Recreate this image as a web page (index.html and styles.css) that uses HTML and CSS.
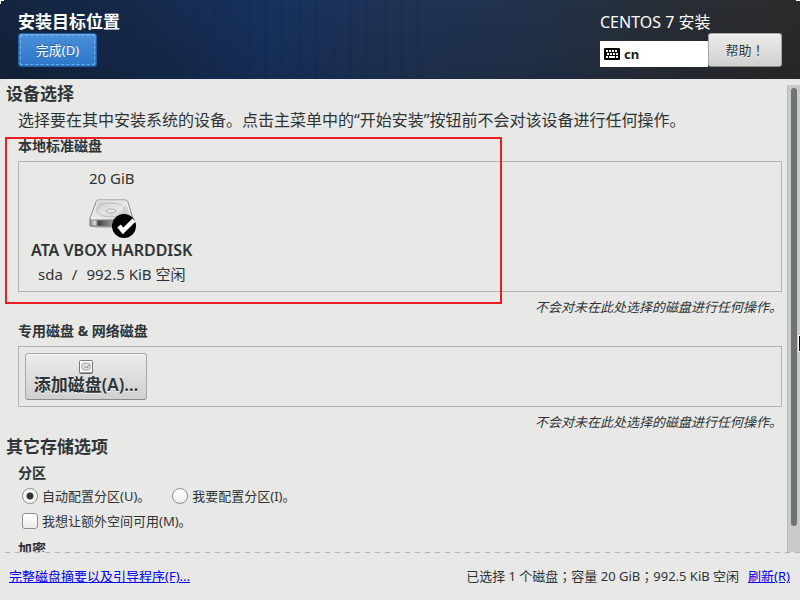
FILE: index.html
```html
<!DOCTYPE html>
<html lang="zh-CN">
<head>
  <meta charset="utf-8">
  <title>安装目标位置</title>
  <link rel="stylesheet" href="styles.css">
</head>
<body>
  <header class="topbar">
    <div class="topbar-left">
      <h1>安装目标位置</h1>
      <button class="btn btn-done" type="button">完成(D)</button>
    </div>
    <div class="topbar-right">
      <div class="product">CENTOS 7 安装</div>
      <div class="topbar-row">
        <div class="keyboard">
          <svg width="16" height="12" viewBox="0 0 16 12">
            <rect width="16" height="12" rx="1" fill="#000"/>
            <path d="M2 3h2M5 3h2M8 3h2M11 3h2M3 6h2M6 6h2M9 6h2M12 6h2M2 9h2M5 9h6M12 9h2" stroke="#fff" stroke-width="2"/>
          </svg>
          <span>cn</span>
        </div>
        <button class="btn btn-help" type="button">帮助<span class="punct" lang="ja">！</span></button>
      </div>
    </div>
  </header>

  <div class="middle">
    <main class="content">
      <h2>设备选择</h2>
      <p class="intro">选择要在其中安装系统的设备。点击主菜单中的“开始安装”按钮前不会对该设备进行任何操作。</p>

      <section class="group local">
        <h3>本地标准磁盘</h3>
        <div class="box box-local">
          <button class="disk" type="button">
            <span>20 GiB</span>
            <svg class="disk-icon" width="48" height="48" viewBox="0 0 48 48">
              <defs>
                <linearGradient id="top" x1="0" y1="0" x2="1" y2="1">
                  <stop offset="0" stop-color="#c4c4c4"/>
                  <stop offset=".5" stop-color="#e6e6e6"/>
                  <stop offset="1" stop-color="#b5b5b5"/>
                </linearGradient>
                <linearGradient id="front" x1="0" y1="0" x2="1" y2="0">
                  <stop offset="0" stop-color="#888"/>
                  <stop offset=".12" stop-color="#ddd"/>
                  <stop offset=".2" stop-color="#444"/>
                  <stop offset=".55" stop-color="#999"/>
                  <stop offset="1" stop-color="#777"/>
                </linearGradient>
              </defs>
              <ellipse cx="23" cy="36" rx="22" ry="2" fill="#bbb"/>
              <path d="M2 29h42v6q0 1-1 1H3q-1 0-1-1z" fill="url(#front)" stroke="#777"/>
              <path d="M10 10h27q2 0 3 2l5 17q0 1-1 1H3q-2 0-1-2L8 12q1-2 2-2z" fill="url(#top)" stroke="#8c8c8c"/>
              <path d="M10 11h27q1 0 2 2l4 15H4L9 13q0-2 1-2z" fill="none" stroke="#f6f6f6"/>
              <ellipse cx="23" cy="20" rx="14" ry="7" fill="none" stroke="#c0c0c0"/>
              <ellipse cx="23" cy="21" rx="5" ry="2" fill="#e8e8e8" stroke="#b0b0b0"/>
              <path d="M36 13l-3 6-8 7" fill="none" stroke="#f4f4f4"/>
              <circle cx="36" cy="36" r="12" fill="#000"/>
              <path d="M31 36l4 5 11-11" fill="none" stroke="#fff" stroke-width="4.5"/>
            </svg>
            <strong>ATA VBOX HARDDISK</strong>
            <span class="disk-info"><span>sda</span><span>/</span><span>992.5 KiB 空闲</span></span>
          </button>
        </div>
        <div class="highlight"></div>
        <p class="note">不会对未在此处选择的磁盘进行任何操作。</p>
      </section>

      <section class="group">
        <h3>专用磁盘 &amp; 网络磁盘</h3>
        <div class="box box-network">
          <button class="btn btn-add" type="button">
            <svg width="14" height="14" viewBox="0 0 14 14">
              <rect x=".5" y=".5" width="13" height="13" rx="1" fill="#eee" stroke="#777"/>
              <path d="M1 13h12" stroke="#555"/>
              <rect x="1.5" y="1.5" width="11" height="10" fill="none" stroke="#fff"/>
              <ellipse cx="7" cy="6.5" rx="4.5" ry="3.5" fill="#ddd" stroke="#aaa"/>
              <path d="M5 7h4M8 8l3-4" stroke="#999"/>
            </svg>
            <span>添加磁盘(A)…</span>
          </button>
        </div>
        <p class="note">不会对未在此处选择的磁盘进行任何操作。</p>
      </section>

      <h2>其它存储选项</h2>
      <section class="group options">
        <h3>分区</h3>
        <div class="option-row">
          <label><input type="radio" name="partition" checked>自动配置分区(U)。</label>
          <label><input type="radio" name="partition">我要配置分区(I)。</label>
        </div>
        <div class="option-row">
          <label><input type="checkbox">我想让额外空间可用(M)。</label>
        </div>
        <h3>加密</h3>
      </section>
    </main>
    <div class="scrollbar"><div class="thumb"></div></div>
  </div>

  <footer class="bottombar">
    <a href="#">完整磁盘摘要以及引导程序(F)...</a>
    <div class="summary">
      <span>已选择 1 个磁盘<span class="punct" lang="ja">；</span>容量 20 GiB<span class="punct" lang="ja">；</span>992.5 KiB 空闲</span>
      <a href="#">刷新(R)</a>
    </div>
  </footer>
  <div class="cursor"></div>
</body>
</html>
```
FILE: styles.css
```css
* {
  box-sizing: border-box;
}
body {
  margin: 0;
  height: 100vh;
  display: flex;
  flex-direction: column;
  position: relative;
  overflow: hidden;
  background: #e8e8e6;
  color: #2e3436;
  font-family: "Noto Sans", "Noto Sans CJK SC", sans-serif;
  font-size: 13px;
}
h1, h2, h3, p {
  margin: 0;
}
a {
  color: #0000ee;
}
button, input {
  font-family: inherit;
  color: #2e3436;
  margin: 0;
}
/* centred full-width punctuation */
.punct {
  font-family: "Noto Sans CJK JP", sans-serif;
  line-height: 1;
}

/* top bar */
.topbar {
  height: 79px;
  flex: none;
  display: flex;
  justify-content: space-between;
  padding: 11px 18px 0;
  color: #fff;
  background:
    linear-gradient(#fff, #fff) 0 0 / 4px 1px no-repeat,
    linear-gradient(#fff, #fff) 0 0 / 1px 4px no-repeat,
    linear-gradient(#fff, #fff) 100% 0 / 4px 1px no-repeat,
    repeating-linear-gradient(90deg, rgba(0,0,0,0) 0 5px, rgba(0,0,0,.07) 7px, rgba(0,0,0,0) 10px 17px) 190px 0 / 230px 100% no-repeat,
    linear-gradient(180deg, rgba(0,0,0,0), rgba(0,0,0,.12)),
    linear-gradient(90deg, #14243f 0%, #152a4c 18%, #17325f 34%, #1f3355 50%, #22324b 68%, #282e37 82%, #2b2b2b 100%);
}
.topbar h1 {
  font-size: 17px;
  line-height: 22px;
}
.product {
  font-size: 16px;
  line-height: 22px;
}
.topbar-row {
  display: flex;
  align-items: flex-end;
}
.keyboard {
  width: 108px;
  height: 26px;
  display: flex;
  align-items: center;
  gap: 4px;
  padding-left: 4px;
  background: #fff;
  color: #1a1a1a;
  font-weight: bold;
}
.btn {
  border: 1px solid #a6a6a4;
  border-bottom-color: #8a8a88;
  border-radius: 3px;
  background: linear-gradient(#ececeb, #d0d0ce);
  box-shadow: inset 0 1px #f5f5f4;
  text-shadow: 0 1px #f4f4f4;
  font-size: 13px;
}
.btn-help {
  width: 74px;
  height: 34px;
  padding: 0 0 2px;
}
.btn-done {
  display: block;
  width: 79px;
  height: 34px;
  padding: 0 0 2px;
  color: #fff;
  border-color: #1c5fab;
  background: linear-gradient(#4a90d9, #2d76c8);
  box-shadow: inset 0 1px #6ba5e2;
  text-shadow: 0 -1px #2864a5;
  outline: 1px dashed #78abe2;
  outline-offset: -3px;
}

/* scrolled area */
.middle {
  flex: 1;
  min-height: 0;
  display: flex;
}
.content {
  flex: 1;
  overflow: hidden;
  padding: 2px 5px 0 6px;
}
h2 {
  font-size: 17px;
  line-height: 26px;
}
h3 {
  font-size: 14px;
  line-height: 24px;
}
.intro {
  padding-left: 12px;
  font-size: 16px;
  line-height: 26px;
}
.group {
  position: relative;
  margin: 1px 0 2px 12px;
}
.box {
  margin-top: 3px;
  border: 1px solid #b3b3b1;
}
.box-local {
  height: 131px;
}
.disk {
  display: flex;
  flex-direction: column;
  align-items: center;
  padding: 4px 12px;
  border: 0;
  background: none;
  font-size: 15px;
  line-height: 24px;
}
.disk strong {
  font-size: 16px;
  font-weight: 600;
}
.disk-info {
  display: flex;
  gap: 9px;
}
.note {
  margin-top: 5px;
  line-height: 20px;
  text-align: right;
  font-style: italic;
}
/* red frame round the local disk */
.highlight {
  position: absolute;
  top: 3px;
  left: -13px;
  width: 497px;
  height: 167px;
  border: 2px solid #ed1c24;
}
.box-network {
  padding: 6px;
}
.btn-add {
  width: 122px;
  height: 47px;
  display: flex;
  flex-direction: column;
  align-items: center;
  justify-content: center;
  padding: 2px 0 0;
  font-size: 17px;
  font-weight: 600;
  line-height: 22px;
}
.btn-add span {
  white-space: nowrap;
}
.option-row {
  display: flex;
  gap: 22px;
  height: 22px;
  margin-bottom: 3px;
  padding-left: 4px;
}
.option-row label {
  display: flex;
  align-items: center;
  gap: 4px;
  line-height: 20px;
}
.option-row + h3 {
  margin-top: 5px;
}
.option-row input {
  appearance: none;
  width: 16px;
  height: 16px;
  border: 1px solid #8f8f8d;
  border-radius: 3px;
  background: linear-gradient(#fff, #ececea);
}
.option-row input[type="radio"] {
  border-radius: 50%;
}
.option-row input:checked {
  background: radial-gradient(circle, #2e3436 0 3px, #f7f7f6 4px);
}
.scrollbar {
  width: 13px;
  margin-top: 6px;
  padding: 3px 3px 26px;
  border-left: 1px solid #b9bbba;
  background: #c9cbca;
}
.thumb {
  height: 100%;
  border-radius: 3px;
  background: #6f7473;
}

/* bottom bar */
.bottombar {
  height: 48px;
  flex: none;
  display: flex;
  justify-content: space-between;
  align-items: center;
  padding: 0 10px 0 9px;
  line-height: 20px;
  background: repeating-linear-gradient(90deg, #e8e8e6 0 5px, #b5b5b3 5px 10px) 0 0 / 100% 1px no-repeat;
}
.summary {
  display: flex;
  gap: 9px;
}
.cursor {
  position: absolute;
  right: 0;
  top: 335px;
  width: 2px;
  height: 17px;
  border: solid #fff;
  border-width: 1px 0 1px 1px;
  background: #000;
}
```
